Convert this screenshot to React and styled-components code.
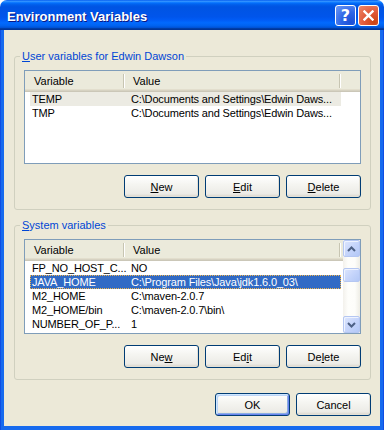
import React from "react";
import styled, { createGlobalStyle } from "styled-components";

const userVars = [
  { name: "TEMP", value: "C:\\Documents and Settings\\Edwin Daws...", state: "inactive" },
  { name: "TMP", value: "C:\\Documents and Settings\\Edwin Daws..." },
];

const systemVars = [
  { name: "FP_NO_HOST_C...", value: "NO" },
  { name: "JAVA_HOME", value: "C:\\Program Files\\Java\\jdk1.6.0_03\\", state: "active" },
  { name: "M2_HOME", value: "C:\\maven-2.0.7" },
  { name: "M2_HOME/bin", value: "C:\\maven-2.0.7\\bin\\" },
  { name: "NUMBER_OF_P...", value: "1" },
];

const VarList = ({ rows, height, scroll }) => (
  <ListView $h={height}>
    <ListMain>
      <Header>
        <HeadCell $w={98} $pad={9}>Variable</HeadCell>
        <HeadSep />
        <HeadCell $w={214} $pad={8}>Value</HeadCell>
        <HeadSep />
      </Header>
      {rows.map((r) => (
        <Row key={r.name} $state={r.state}>
          <Cell>{r.name}</Cell>
          <Cell>{r.value}</Cell>
        </Row>
      ))}
    </ListMain>
    {scroll && (
      <ScrollBar>
        <ScrollBtn>
          <svg width="9" height="6" viewBox="0 0 9 6">
            <path d="M1 5 L4.5 1.5 L8 5" fill="none" stroke="#4d6185" strokeWidth="2" />
          </svg>
        </ScrollBtn>
        <Track>
          <Thumb />
        </Track>
        <ScrollBtn>
          <svg width="9" height="6" viewBox="0 0 9 6">
            <path d="M1 1 L4.5 4.5 L8 1" fill="none" stroke="#4d6185" strokeWidth="2" />
          </svg>
        </ScrollBtn>
      </ScrollBar>
    )}
  </ListView>
);

const ActionRow = ({ second }) => (
  <Buttons>
    {second ? (
      <>
        <Button>Ne<u>w</u></Button>
        <Button>Ed<u>i</u>t</Button>
        <Button>De<u>l</u>ete</Button>
      </>
    ) : (
      <>
        <Button><u>N</u>ew</Button>
        <Button><u>E</u>dit</Button>
        <Button><u>D</u>elete</Button>
      </>
    )}
  </Buttons>
);

export default function App() {
  return (
    <>
      <GlobalStyle />
      <Window>
        <TitleBar>
          <Title>Environment Variables</Title>
          <CaptionButtons>
            <CaptionButton>
              <HelpGlyph>?</HelpGlyph>
            </CaptionButton>
            <CaptionButton $close>
              <svg width="11" height="11" viewBox="0 0 11 11">
                <path d="M1.5 1.5 L9.5 9.5 M9.5 1.5 L1.5 9.5" stroke="#fff" strokeWidth="2.4" strokeLinecap="square" />
              </svg>
            </CaptionButton>
          </CaptionButtons>
        </TitleBar>
        <Frame>
          <Body>
            <Group>
              <Legend><u>U</u>ser variables for Edwin Dawson</Legend>
              <VarList rows={userVars} height={94} />
              <ActionRow />
            </Group>
            <Group $gap>
              <Legend><u>S</u>ystem variables</Legend>
              <VarList rows={systemVars} height={95} scroll />
              <ActionRow second />
            </Group>
            <DialogButtons>
              <Button $default>OK</Button>
              <Button>Cancel</Button>
            </DialogButtons>
          </Body>
        </Frame>
      </Window>
    </>
  );
}

const GlobalStyle = createGlobalStyle`
  html, body {
    margin: 0;
    padding: 0;
    background: #fff;
  }
  body {
    font-family: "Liberation Sans", Arial, sans-serif;
    font-size: 11px;
  }
`;

const Window = styled.div`
  width: 384px;
  height: 430px;
  display: flex;
  flex-direction: column;
`;

const TitleBar = styled.div`
  height: 30px;
  flex-shrink: 0;
  display: flex;
  align-items: center;
  justify-content: space-between;
  padding: 0 5px 0 7px;
  box-sizing: border-box;
  border-radius: 7px 7px 0 0;
  background: linear-gradient(
    to bottom,
    #0058ee 0%,
    #3593ff 4%,
    #288eff 6%,
    #127dff 8%,
    #036ffc 10%,
    #0262ee 14%,
    #0057e5 20%,
    #0054e3 24%,
    #0055eb 56%,
    #005bf5 66%,
    #026afe 76%,
    #0062ef 86%,
    #0052d6 92%,
    #0040ab 94%,
    #003092 100%
  );
`;

const Title = styled.div`
  color: #fff;
  font-family: "Liberation Sans", Arial, sans-serif;
  font-weight: bold;
  font-size: 13px;
  text-shadow: 1px 1px #0a1883;
  padding-top: 2px;
`;

const CaptionButtons = styled.div`
  display: flex;
  gap: 2px;
  padding-top: 1px;
`;

const CaptionButton = styled.div`
  width: 21px;
  height: 21px;
  box-sizing: border-box;
  border: 1px solid #fff;
  border-radius: 3px;
  display: flex;
  align-items: center;
  justify-content: center;
  background: ${({ $close }) =>
    $close
      ? "radial-gradient(circle at 80% 85%, #cc4412 0%, #e0593a 45%, #ef8868 100%)"
      : "radial-gradient(circle at 80% 85%, #1c4fd6 0%, #2e66e6 45%, #6f9af6 100%)"};
`;

const HelpGlyph = styled.span`
  color: #fff;
  font-family: "DejaVu Sans", sans-serif;
  font-weight: bold;
  font-size: 16px;
  line-height: 1;
`;

const Frame = styled.div`
  flex: 1;
  display: flex;
  padding: 0 4px 4px;
  background: linear-gradient(to right, #0831d9 0, #166aee 1px, #166aee calc(100% - 1px), #0831d9 100%);
`;

const Body = styled.div`
  flex: 1;
  display: flex;
  flex-direction: column;
  background: #ece9d8;
  padding: 20px 9px 0 10px;
`;

const Group = styled.fieldset`
  margin: ${({ $gap }) => ($gap ? "9px" : "0")} 0 0 0;
  padding: 7px 9px 11px 9px;
  border: 1px solid #d0d0bf;
  border-radius: 3px;
  min-width: 0;
`;

const Legend = styled.legend`
  color: #0046d5;
  padding: 0 2px;
  margin-left: -4px;
  line-height: 13px;
  font-size: 11px;
`;

const ListView = styled.div`
  height: ${({ $h }) => $h}px;
  box-sizing: border-box;
  border: 1px solid #7f9db9;
  background: #fff;
  display: flex;
`;

const ListMain = styled.div`
  flex: 1;
  min-width: 0;
  display: flex;
  flex-direction: column;
`;

const Header = styled.div`
  height: 21px;
  flex-shrink: 0;
  display: flex;
  align-items: center;
  background: #ebeadb;
  box-shadow: inset 0 -1px 0 #cbc7b8, inset 0 -2px 0 #d6d2c2, inset 0 -3px 0 #e2decd;
  padding-bottom: 2px;
  box-sizing: border-box;
`;

const HeadCell = styled.div`
  width: ${({ $w }) => $w}px;
  padding-left: ${({ $pad }) => $pad}px;
  box-sizing: border-box;
  color: #000;
  white-space: nowrap;
`;

const HeadSep = styled.div`
  width: 1px;
  height: 14px;
  background: #c7c5b2;
  border-right: 1px solid #fff;
`;

const Row = styled.div`
  height: 14px;
  line-height: 14px;
  width: 311px;
  margin-left: 5px;
  padding-left: 2px;
  box-sizing: border-box;
  display: grid;
  grid-template-columns: 99px 1fr;
  white-space: nowrap;
  letter-spacing: -0.15px;
  background: ${({ $state }) =>
    $state === "active" ? "#316ac5" : $state === "inactive" ? "#ecebe3" : "transparent"};
  color: ${({ $state }) => ($state === "active" ? "#fff" : "#000")};
  outline: ${({ $state }) => ($state === "active" ? "1px dotted #f0b44c" : "none")};
  outline-offset: -1px;
`;

const Cell = styled.div`
  overflow: hidden;
`;

const ScrollBar = styled.div`
  width: 17px;
  flex-shrink: 0;
  display: flex;
  flex-direction: column;
  background: linear-gradient(to right, #f3f1ec, #fefefb 30%, #fdfdfa 70%, #eeede5);
`;

const ScrollBtn = styled.div`
  width: 17px;
  height: 17px;
  box-sizing: border-box;
  border: 1px solid #b5c7f2;
  border-radius: 2px;
  display: flex;
  align-items: center;
  justify-content: center;
  background: linear-gradient(135deg, #dde6fd 0%, #c6d5fb 50%, #b3c8f6 100%);
  box-shadow: inset 1px 1px 0 #eef3ff;
`;

const Track = styled.div`
  flex: 1;
  padding-top: 11px;
`;

const Thumb = styled(ScrollBtn)`
  height: 14px;
`;

const Buttons = styled.div`
  display: flex;
  justify-content: flex-end;
  gap: 6px;
  margin-top: 11px;
`;

const DialogButtons = styled(Buttons)`
  margin-top: 13px;
`;

const Button = styled.button`
  width: 75px;
  height: 23px;
  padding: 0;
  font-family: "Liberation Sans", Arial, sans-serif;
  font-size: 11px;
  color: #000;
  border: 1px solid #003c74;
  border-radius: 3px;
  background: linear-gradient(to bottom, #fff 0%, #f5f5f1 40%, #ecebe6 85%, #d8d2c7 100%);
  box-shadow: ${({ $default }) =>
    $default
      ? "inset 1px 1px 0 #cee7ff, inset -1px -1px 0 #6982ee, inset 2px 2px 0 #bcd4f6, inset -2px -2px 0 #89ade4"
      : "inset -1px -1px 0 #e3e0d6"};
  u {
    text-decoration: underline;
  }
`;
